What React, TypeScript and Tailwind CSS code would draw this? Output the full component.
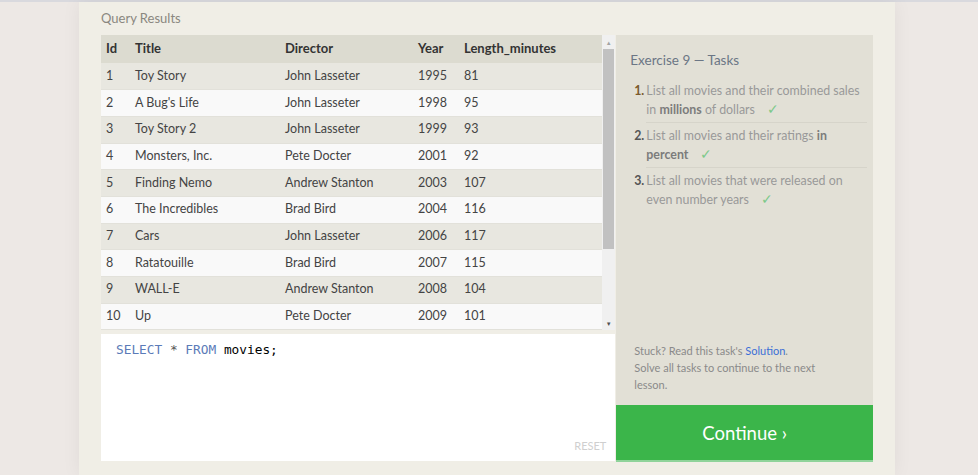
const rows = [
  [1, "Toy Story", "John Lasseter", 1995, 81],
  [2, "A Bug's Life", "John Lasseter", 1998, 95],
  [3, "Toy Story 2", "John Lasseter", 1999, 93],
  [4, "Monsters, Inc.", "Pete Docter", 2001, 92],
  [5, "Finding Nemo", "Andrew Stanton", 2003, 107],
  [6, "The Incredibles", "Brad Bird", 2004, 116],
  [7, "Cars", "John Lasseter", 2006, 117],
  [8, "Ratatouille", "Brad Bird", 2007, 115],
  [9, "WALL-E", "Andrew Stanton", 2008, 104],
  [10, "Up", "Pete Docter", 2009, 101],
];

function Check() {
  return <span className="ml-3 text-[14px] leading-[10px] text-[#7cc98a]">✓</span>;
}

export default function App() {
  return (
    <div className="min-h-[475px] bg-[#ede8e5] border-t-2 border-[#d9d9de] font-['Lato',sans-serif]">
      <div className="ml-[79px] w-[816px] h-[473px] bg-[#f0eee6] px-[22px] pt-[7px] shadow-[0_0_18px_rgba(0,0,0,0.06)]">
        <div className="text-[13px] text-[#8a8780] h-[26px]">Query Results</div>
        <div className="flex">
          <div className="w-[515px] flex flex-col gap-[4px]">
            <div className="h-[295px] flex">
              <div className="flex-1 bg-[#f9f9f9] overflow-hidden">
                <table className="w-full text-[12.5px] text-[#444] border-collapse">
                  <thead>
                    <tr className="bg-[#dcdbd0] h-[28px] text-left text-[#333] text-[13px]">
                      <th className="w-[29px] pl-[5px] font-bold">Id</th>
                      <th className="w-[150px] pl-[5px] font-bold">Title</th>
                      <th className="w-[133px] pl-[5px] font-bold">Director</th>
                      <th className="w-[46px] pl-[5px] font-bold">Year</th>
                      <th className="pl-[5px] font-bold">Length_minutes</th>
                    </tr>
                  </thead>
                  <tbody>
                    {rows.map((r, i) => (
                      <tr
                        key={i}
                        className={
                          "h-[26.7px] border-b border-[#e2e1da] " +
                          (i % 2 === 0 ? "bg-[#e8e7e0]" : "bg-[#f9f9f9]")
                        }
                      >
                        {r.map((c, j) => (
                          <td key={j} className="pl-[5px]">
                            {c}
                          </td>
                        ))}
                      </tr>
                    ))}
                  </tbody>
                </table>
              </div>
              <div className="w-[13px] bg-[#f0f0f0] flex flex-col items-center">
                <div className="h-[14px] flex items-center text-[6px] text-[#a3a3a3]">▲</div>
                <div className="w-[11px] h-[200px] bg-[#c1c1c1]" />
                <div className="flex-1" />
                <div className="h-[14px] flex items-center text-[6px] text-[#505050]">▼</div>
              </div>
            </div>
            <div className="h-[127px] bg-white relative pl-[15px] pt-[6px]">
              <div className="font-['DejaVu_Sans_Mono',monospace] text-[12.8px]">
                <span className="text-[#5b7bb8]">SELECT</span>
                <span className="text-[#555]"> * </span>
                <span className="text-[#5b7bb8]">FROM</span>
                <span className="text-black"> movies;</span>
              </div>
              <div className="absolute right-[9px] bottom-[7px] text-[11px] text-[#cfcfcf]">RESET</div>
            </div>
          </div>
          <div className="w-[257px] h-[427px] flex flex-col ml-[1px]">
            <div className="flex-1 bg-[#e2e0d6] pl-[14px] pr-[6px] pt-[15px] flex flex-col">
              <div className="text-[13.5px] text-[#6b7685]">Exercise 9 — Tasks</div>
              <ol className="mt-[11px] text-[12.4px] leading-[19px] text-[#999]">
                <li className="flex">
                  <span className="w-[16px] text-right pr-[2px] font-bold text-[#7a5a2c]">1.</span>
                  <div className="flex-1 pb-[3px] border-b border-[#d6d4ca]">
                    List all movies and their combined sales in <b className="text-[#7c7c7c]">millions</b> of dollars
                    <Check />
                  </div>
                </li>
                <li className="flex mt-[3px]">
                  <span className="w-[16px] text-right pr-[2px] font-bold text-[#555]">2.</span>
                  <div className="flex-1 pb-[3px] border-b border-[#d6d4ca]">
                    List all movies and their ratings <b className="text-[#7c7c7c]">in percent</b>
                    <Check />
                  </div>
                </li>
                <li className="flex mt-[3px]">
                  <span className="w-[16px] text-right pr-[2px] font-bold text-[#555]">3.</span>
                  <div className="flex-1">
                    List all movies that were released on even number years
                    <Check />
                  </div>
                </li>
              </ol>
              <div className="flex-1" />
              <div className="text-[11px] leading-[17px] text-[#8a8a8a] pb-[12px] pr-[46px] pl-[4px]">
                Stuck? Read this task's <span className="text-[#3b6fd6]">Solution</span>.
                <br />
                Solve all tasks to continue to the next lesson.
              </div>
            </div>
            <div className="h-[57px] bg-[#3bb54a] border-b-2 border-[#8fd39a] pt-[3px] flex items-center justify-center text-white text-[18.5px]">
              Continue ›
            </div>
          </div>
        </div>
      </div>
    </div>
  );
}
